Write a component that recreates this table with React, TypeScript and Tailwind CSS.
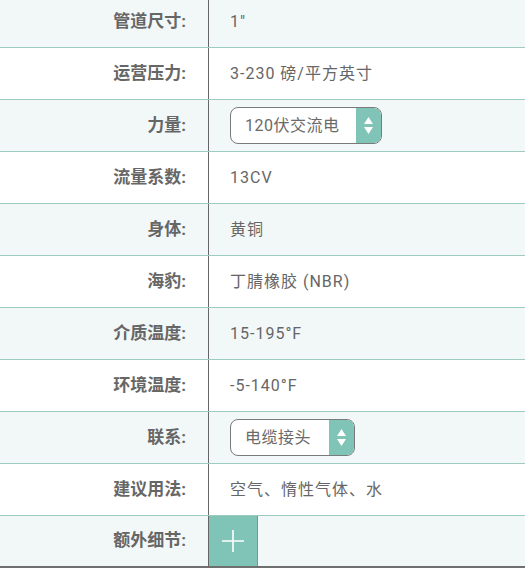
import React from "react";

const font = "font-['Roboto','Noto_Sans_CJK_SC',sans-serif]";

function Select({ label, width }: { label: string; width: string }) {
  return (
    <div className={`flex h-[37px] ${width} overflow-hidden rounded-[8px] border border-[#7a7a7a] bg-white`}>
      <div className="flex flex-1 items-center pl-[14px] text-[16px] tracking-[0.5px] text-[#6a6a6a]">{label}</div>
      <div className="flex w-[25px] flex-col items-center justify-center gap-[3px] bg-[#80c4b7]">
        <svg width="9" height="7" viewBox="0 0 9 7"><path d="M4.5 0 L9 7 L0 7 Z" fill="#fff" /></svg>
        <svg width="9" height="7" viewBox="0 0 9 7"><path d="M0 0 L9 0 L4.5 7 Z" fill="#fff" /></svg>
      </div>
    </div>
  );
}

type Row = { label: string; value?: string; kind?: "select1" | "select2" | "plus" };

const rows: Row[] = [
  { label: "管道尺寸:", value: "1\"" },
  { label: "运营压力:", value: "3-230 磅/平方英寸" },
  { label: "力量:", kind: "select1" },
  { label: "流量系数:", value: "13CV" },
  { label: "身体:", value: "黄铜" },
  { label: "海豹:", value: "丁腈橡胶 (NBR)" },
  { label: "介质温度:", value: "15-195°F" },
  { label: "环境温度:", value: "-5-140°F" },
  { label: "联系:", kind: "select2" },
  { label: "建议用法:", value: "空气、惰性气体、水" },
  { label: "额外细节:", kind: "plus" },
];

export default function App() {
  return (
    <div className={`w-[525px] h-[572px] overflow-hidden bg-white ${font}`}>
      <div className="-mt-[4px]">
        {rows.map((r, i) => {
          const last = i === rows.length - 1;
          const bg = i % 2 === 0 ? "bg-[#f2f8f8]" : "bg-white";
          const bb = last ? "border-b-2 border-[#6f6f6f]" : "border-b border-[#9dcbc2]";
          return (
            <div key={i} className={`flex h-[52px] ${bg} ${bb}`}>
              <div className="flex w-[209px] shrink-0 items-center justify-end border-r border-[#666] pr-[22px] text-[17px] font-bold text-[#666]">
                {r.label}
              </div>
              <div className="flex flex-1 items-center">
                {r.kind === "select1" && (
                  <div className="pl-[21px]"><Select label="120伏交流电" width="w-[152px]" /></div>
                )}
                {r.kind === "select2" && (
                  <div className="pl-[21px]"><Select label="电缆接头" width="w-[125px]" /></div>
                )}
                {r.kind === "plus" && (
                  <div className="flex h-full w-[49px] items-center justify-center border-r border-[#6a9e95] bg-[#80c4b7]">
                    <svg width="24" height="24" viewBox="0 0 24 24">
                      <path d="M12 1 V23 M1 12 H23" stroke="#fff" strokeWidth="1.6" />
                    </svg>
                  </div>
                )}
                {!r.kind && (
                  <div className="pl-[21px] text-[16px] tracking-[1px] text-[#666]">{r.value}</div>
                )}
              </div>
            </div>
          );
        })}
      </div>
    </div>
  );
}
